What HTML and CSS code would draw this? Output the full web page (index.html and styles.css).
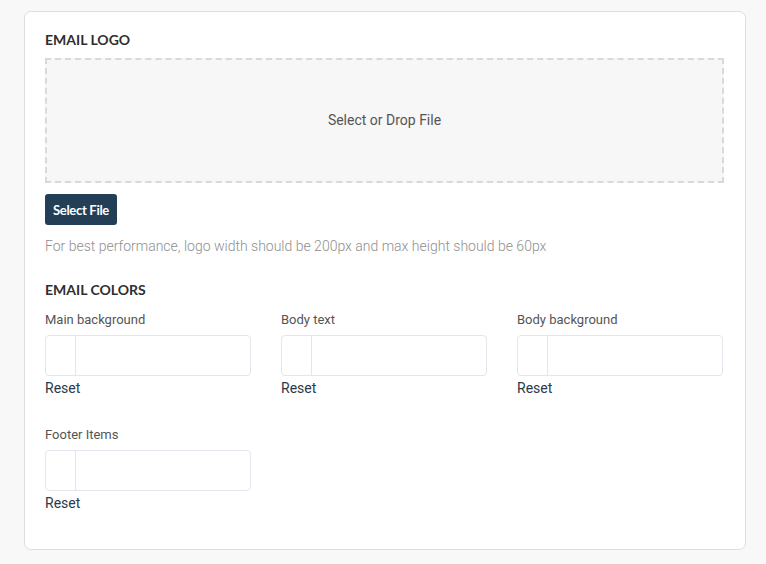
FILE: index.html
```html
<!DOCTYPE html>
<html>
<head>
<meta charset="utf-8">
<link rel="stylesheet" href="styles.css">
</head>
<body>
<div class="card">
  <h3 class="section-title">EMAIL LOGO</h3>
  <div class="dropzone">Select or Drop File</div>
  <button class="btn">Select File</button>
  <p class="help">For best performance, logo width should be 200px and max height should be 60px</p>
  <h3 class="section-title colors-title">EMAIL COLORS</h3>
  <div class="colors">
    <div class="field">
      <label class="label">Main background</label>
      <div class="picker"><span class="swatch"></span><span class="value"></span></div>
      <a class="reset">Reset</a>
    </div>
    <div class="field">
      <label class="label">Body text</label>
      <div class="picker"><span class="swatch"></span><span class="value"></span></div>
      <a class="reset">Reset</a>
    </div>
    <div class="field">
      <label class="label">Body background</label>
      <div class="picker"><span class="swatch"></span><span class="value"></span></div>
      <a class="reset">Reset</a>
    </div>
    <div class="field">
      <label class="label">Footer Items</label>
      <div class="picker"><span class="swatch"></span><span class="value"></span></div>
      <a class="reset">Reset</a>
    </div>
  </div>
</div>
</body>
</html>
```
FILE: styles.css
```css
html, body {
  margin: 0;
  padding: 0;
  background: #f8f8f8;
  font-family: Roboto, "Liberation Sans", sans-serif;
}
.card {
  box-sizing: border-box;
  margin: 11px 0 0 24px;
  width: 722px;
  height: 539px;
  background: #fff;
  border: 1px solid #dedede;
  border-radius: 7px;
  padding: 20px 21px 20px 20px;
}
.section-title {
  margin: 0 0 10px;
  font-family: Lato, "Liberation Sans", sans-serif;
  font-weight: 700;
  font-size: 14px;
  line-height: 16px;
  color: #2f2f2f;
}
.dropzone {
  box-sizing: border-box;
  height: 125px;
  background: #f7f7f7;
  border: 2px dashed #d9d9d9;
  display: flex;
  align-items: center;
  justify-content: center;
  padding-bottom: 2px;
  font-size: 14px;
  color: #555;
}
.btn {
  display: block;
  margin-top: 11px;
  height: 31px;
  width: 72px;
  padding: 0;
  border: none;
  border-radius: 3px;
  background: #233f57;
  color: #fff;
  font-family: Lato, "Liberation Sans", sans-serif;
  font-weight: 700;
  font-size: 13px;
  letter-spacing: -0.3px;
}
.help {
  margin: 12px 0 0;
  font-size: 14px;
  line-height: 18px;
  font-weight: 300;
  color: #8f8f8f;
}
.colors-title {
  margin-top: 27px;
  margin-bottom: 14px;
}
.colors {
  display: grid;
  grid-template-columns: repeat(3, 206px);
  column-gap: 30px;
  row-gap: 29px;
}
.field {
  display: flex;
  flex-direction: column;
  align-items: flex-start;
}
.label {
  font-size: 13px;
  line-height: 16px;
  color: #555;
  margin-bottom: 7px;
}
.picker {
  box-sizing: border-box;
  width: 100%;
  height: 41px;
  border: 1px solid #e3e6ec;
  border-radius: 4px;
  display: flex;
}
.swatch {
  width: 29px;
  border-right: 1px solid #e3e6ec;
}
.value {
  flex: 1;
}
.reset {
  margin-top: 2px;
  font-size: 14px;
  line-height: 20px;
  color: #2a3a4a;
  cursor: pointer;
}
```
